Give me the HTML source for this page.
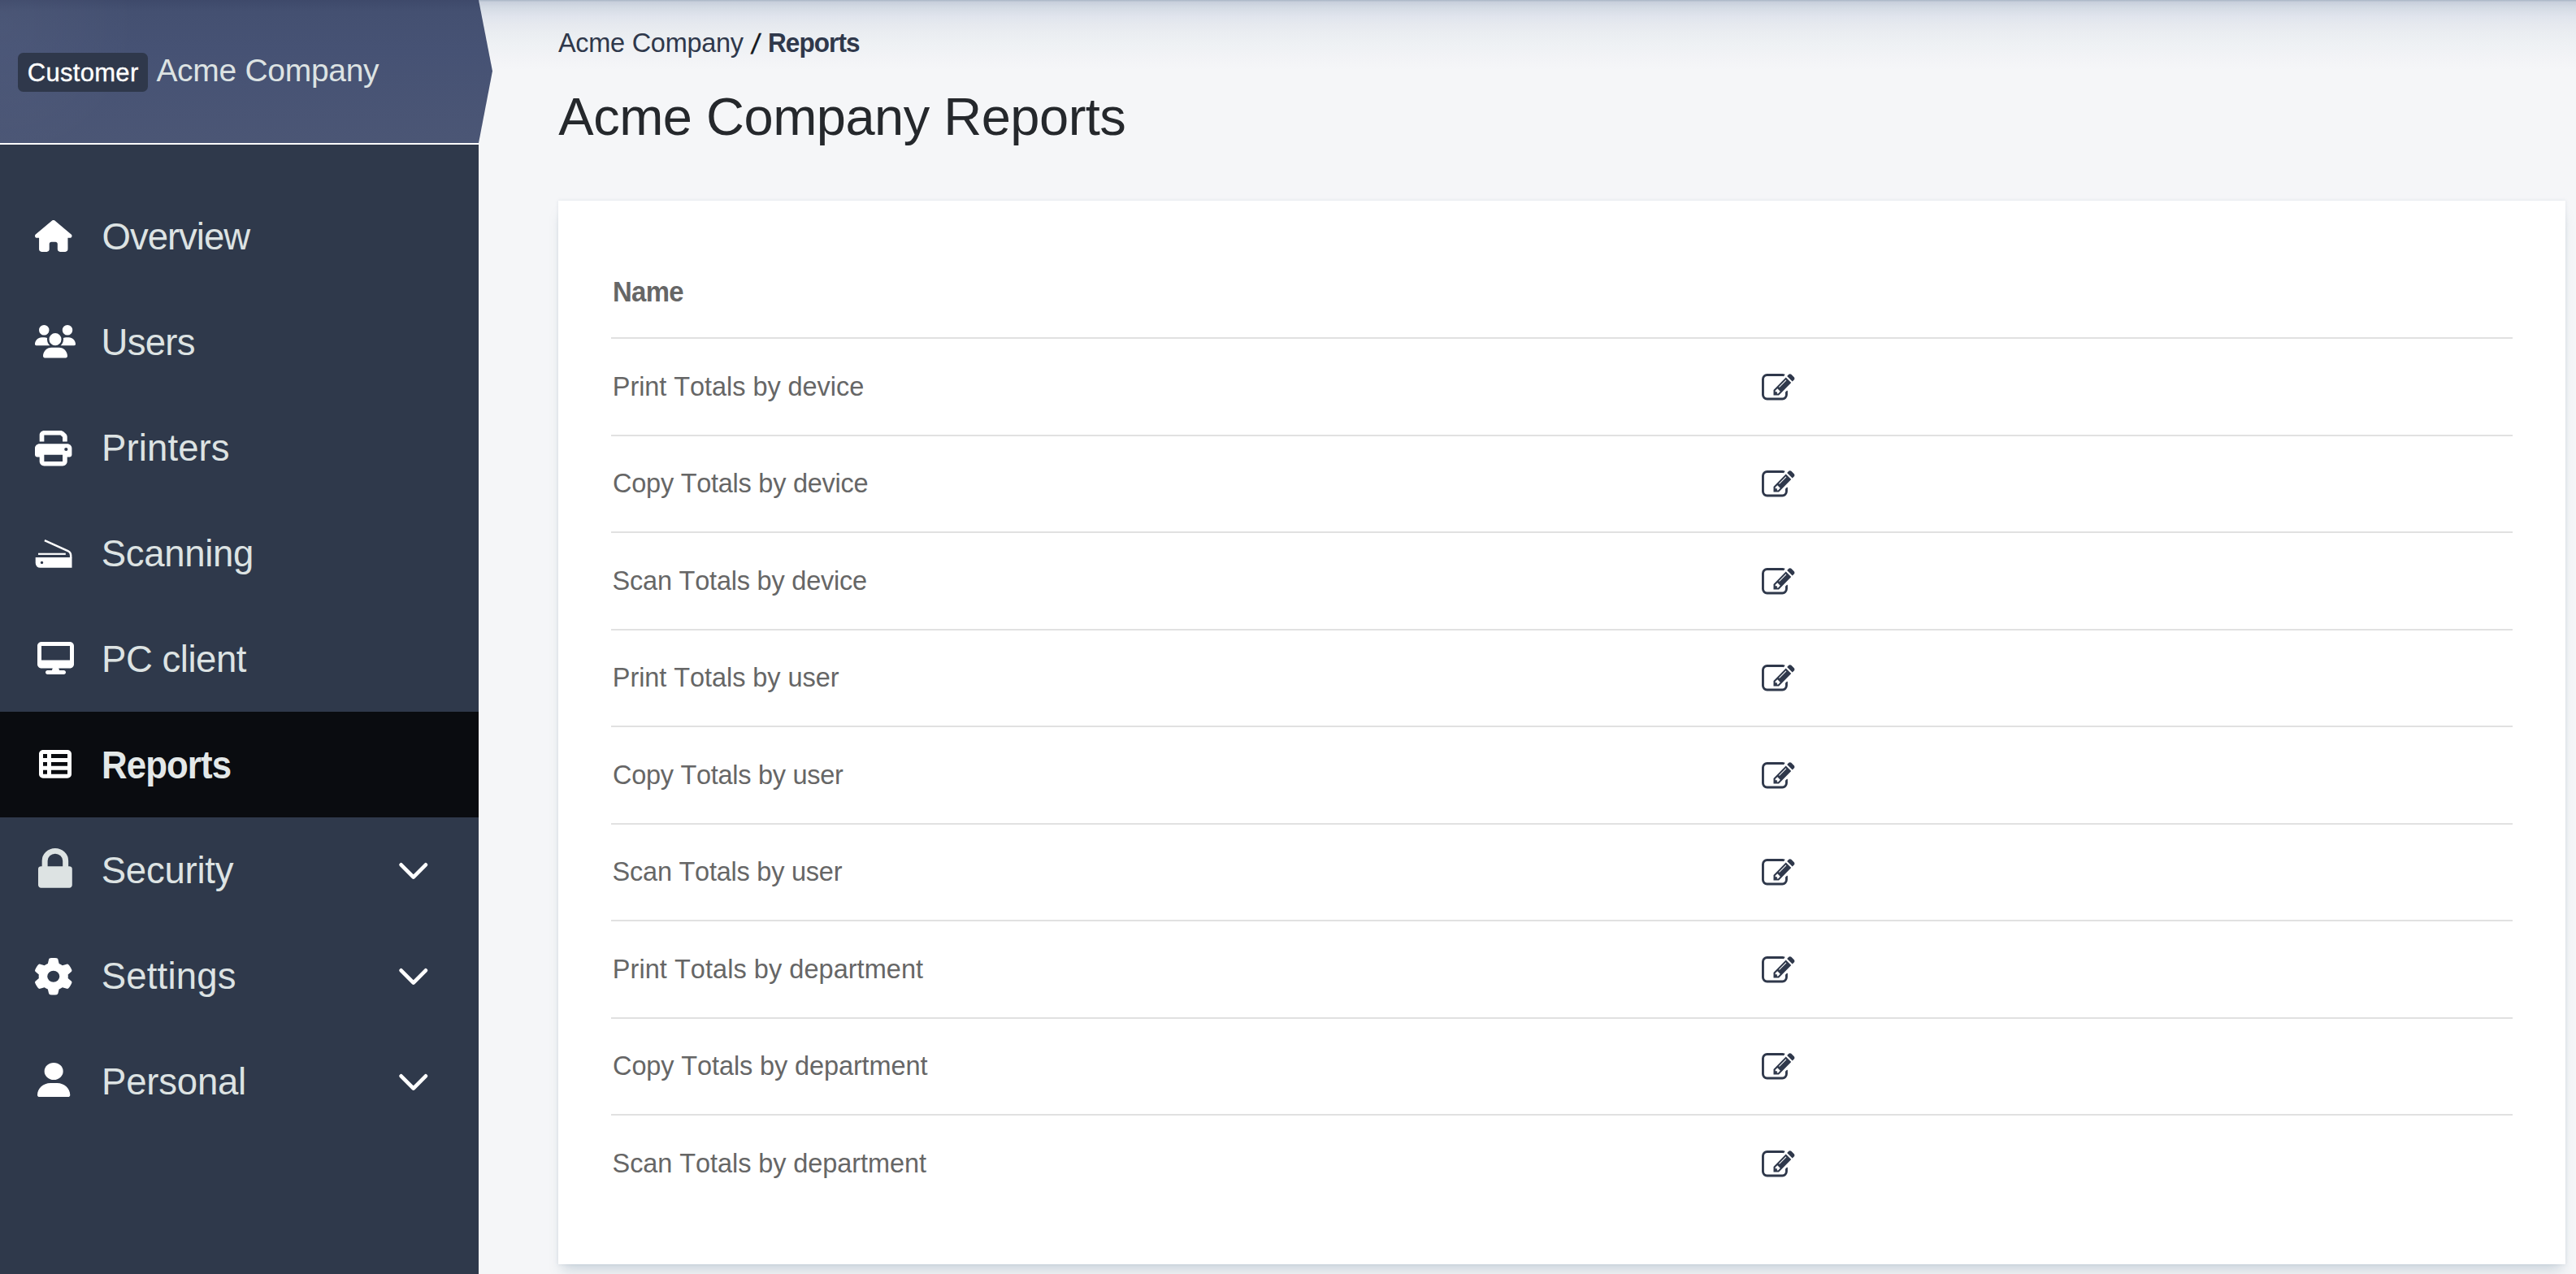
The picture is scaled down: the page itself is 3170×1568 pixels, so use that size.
<!DOCTYPE html>
<html lang="en">
<head>
<meta charset="utf-8">
<title>Acme Company Reports</title>
<style>
*{box-sizing:border-box;margin:0;padding:0}
html,body{width:3170px;height:1568px;overflow:hidden}
body{position:relative;background:#f5f6f8;font-family:"Liberation Sans",sans-serif;color:#212529}
.abs{position:absolute}
.t{position:absolute;white-space:nowrap;line-height:1;font-kerning:none}
svg{position:absolute;overflow:visible}
#main{position:absolute;left:0;top:0;width:3170px;height:1568px;background:linear-gradient(to bottom,#a8b5c5 0px,#c8cfdc 2.5px,#d5dce5 10px,#e0e4ed 20px,#e6e9ef 30px,#eaedf1 40px,#eef1f4 55px,#f2f3f6 70px,#f5f6f8 86px)}
#sidebar{position:absolute;left:0;top:0;width:589px;height:1568px;background:#2f394b}
#hdr{left:0;top:0;width:620px;height:176px}
#hdrline{position:absolute;left:0;top:176px;width:589px;height:2px;background:#fff}
#active{position:absolute;left:0;top:876px;width:589px;height:130px;background:#0a0c10}
#card{position:absolute;left:687px;top:247px;width:2470px;height:1309px;background:#fff;box-shadow:0 12.5px 15px -5px rgba(100,128,150,.28),0 0 4px rgba(100,128,150,.15)}
.hl{position:absolute;left:752px;width:2340px;height:2px;background:#e1e1e1}
</style>
</head>
<body>
<div id="main"></div>
<div id="sidebar"></div>
<svg id="hdr" viewBox="0 0 620 176">
  <defs>
    <linearGradient id="hg" x1="0" y1="0" x2="0" y2="1">
      <stop offset="0" stop-color="#3e496a"/>
      <stop offset="0.08" stop-color="#445071"/>
      <stop offset="0.35" stop-color="#465274"/>
      <stop offset="1" stop-color="#4b5675"/>
    </linearGradient>
    <radialGradient id="hr" cx="0" cy="30" r="170" gradientUnits="userSpaceOnUse">
      <stop offset="0" stop-color="#fff" stop-opacity="0.035"/>
      <stop offset="1" stop-color="#fff" stop-opacity="0"/>
    </radialGradient>
  </defs>
  <path d="M0 0H589L606 87.500L589 176H0Z" fill="url(#hg)"/>
  <path d="M0 0H589L606 87.500L589 176H0Z" fill="url(#hr)"/>
</svg>
<div id="hdrline"></div>
<div id="active"></div>
<div class="abs" style="left:22px;top:65px;width:160px;height:47.75px;border-radius:6.5px;background:#2f384b"></div>
<div class="t" id="cust" style="left:33.73px;top:73.76px;font-size:31px;color:#fff;letter-spacing:0.303px;-webkit-text-stroke:0.35px #fff;">Customer</div>
<div class="t" id="acme" style="left:192.42px;top:66.99px;font-size:39px;color:#dde3e3;letter-spacing:-0.299px;">Acme Company</div>
<div class="t" style="left:125.49px;top:268.73px;font-size:45.5px;color:#dde3e3;letter-spacing:-0.997px;">Overview</div>
<div class="t" style="left:124.60px;top:398.73px;font-size:45.5px;color:#dde3e3;letter-spacing:-0.750px;">Users</div>
<div class="t" style="left:125.02px;top:528.73px;font-size:45.5px;color:#dde3e3;letter-spacing:0.121px;">Printers</div>
<div class="t" style="left:124.73px;top:658.73px;font-size:45.5px;color:#dde3e3;letter-spacing:-0.295px;">Scanning</div>
<div class="t" style="left:125.02px;top:788.73px;font-size:45.5px;color:#dde3e3;letter-spacing:-0.455px;">PC client</div>
<div class="t" style="left:124.76px;top:917.96px;font-size:47.6px;color:#e3e8e8;letter-spacing:-0.983px;font-weight:bold;transform:scaleX(0.92);transform-origin:0 0;">Reports</div>
<div class="t" style="left:124.73px;top:1048.73px;font-size:45.5px;color:#dde3e3;letter-spacing:-0.232px;">Security</div>
<div class="t" style="left:124.73px;top:1178.73px;font-size:45.5px;color:#dde3e3;letter-spacing:0.200px;">Settings</div>
<div class="t" style="left:125.02px;top:1308.73px;font-size:45.5px;color:#dde3e3;letter-spacing:-0.200px;">Personal</div>
<div class="t" style="left:686.94px;top:36.99px;font-size:32.5px;color:#2f384b;letter-spacing:-0.279px;">Acme Company</div>
<div class="t" style="left:924.50px;top:36.99px;font-size:32.5px;color:#15181c;letter-spacing:0.000px;transform:translate(0.6px,1.2px) skewX(-9deg) scaleY(1.06);-webkit-text-stroke:0.5px #15181c;">/</div>
<div class="t" style="left:945.19px;top:36.30px;font-size:33.2px;color:#2f384b;letter-spacing:-0.976px;font-weight:bold;transform:scaleX(0.95);transform-origin:0 0;">Reports</div>
<div class="t" id="h1" style="left:687.37px;top:110.73px;font-size:65px;color:#25282c;letter-spacing:-0.504px;">Acme Company Reports</div>
<div id="card"></div>
<div class="t" id="name" style="left:753.60px;top:340.97px;font-size:35px;color:#666;letter-spacing:-0.738px;font-weight:bold;transform:scaleX(0.94);transform-origin:0 0;">Name</div>
<div class="hl" style="top:415.30px"></div>
<div class="hl" style="top:534.77px"></div>
<div class="hl" style="top:654.24px"></div>
<div class="hl" style="top:773.71px"></div>
<div class="hl" style="top:893.18px"></div>
<div class="hl" style="top:1012.65px"></div>
<div class="hl" style="top:1132.12px"></div>
<div class="hl" style="top:1251.59px"></div>
<div class="hl" style="top:1371.06px"></div>
<div class="t" style="left:753.82px;top:459.99px;font-size:32.5px;color:#666;letter-spacing:-0.060px;">Print Totals by device</div>
<div class="t" style="left:754.05px;top:579.46px;font-size:32.5px;color:#666;letter-spacing:-0.262px;">Copy Totals by device</div>
<div class="t" style="left:753.61px;top:698.93px;font-size:32.5px;color:#666;letter-spacing:-0.219px;">Scan Totals by device</div>
<div class="t" style="left:753.82px;top:818.40px;font-size:32.5px;color:#666;letter-spacing:-0.066px;">Print Totals by user</div>
<div class="t" style="left:754.05px;top:937.87px;font-size:32.5px;color:#666;letter-spacing:-0.290px;">Copy Totals by user</div>
<div class="t" style="left:753.61px;top:1057.34px;font-size:32.5px;color:#666;letter-spacing:-0.242px;">Scan Totals by user</div>
<div class="t" style="left:753.82px;top:1176.81px;font-size:32.5px;color:#666;letter-spacing:0.045px;">Print Totals by department</div>
<div class="t" style="left:754.05px;top:1296.28px;font-size:32.5px;color:#666;letter-spacing:-0.118px;">Copy Totals by department</div>
<div class="t" style="left:753.61px;top:1415.75px;font-size:32.5px;color:#666;letter-spacing:-0.083px;">Scan Totals by department</div>
<svg viewBox="0 0 575.8 512" preserveAspectRatio="none" style="left:43.1px;top:271.2px;width:45.50px;height:38.90px"><path fill="#fff"  d="M575.8 255.5c0 18-15 32.1-32 32.1h-32l.7 160.2c0 2.700-.2 5.400-.5 8.100V472c0 22.100-17.900 40-40 40H456c-1.100 0-2.200 0-3.300-.1c-1.400 .1-2.800 .1-4.200 .1H416 392c-22.100 0-40-17.900-40-40V448 384c0-17.700-14.300-32-32-32H256c-17.700 0-32 14.300-32 32v64 24c0 22.100-17.900 40-40 40H160 128.100c-1.500 0-3-.1-4.500-.2c-1.200 .1-2.400 .2-3.600 .2H104c-22.100 0-40-17.900-40-40V360c0-.9 0-1.900 .1-2.800V287.600H32c-18 0-32-14-32-32.100c0-9 3-17 10-24L266.400 8c7-7 15-8 22-8s15 2 21 7L564.800 231.500c8 7 12 15 11 24z"/></svg>
<svg viewBox="0 0 640 512" preserveAspectRatio="none" style="left:43.4px;top:399.7px;width:50.00px;height:40.40px"><path fill="#fff"  d="M144 0a80 80 0 1 1 0 160A80 80 0 1 1 144 0zM512 0a80 80 0 1 1 0 160A80 80 0 1 1 512 0zM0 298.700C0 239.800 47.800 192 106.700 192h42.700c15.900 0 31 3.500 44.600 9.700c-1.300 7.200-1.900 14.700-1.900 22.300c0 38.200 16.800 72.500 43.300 96c-.2 0-.4 0-.7 0H21.300C9.600 320 0 310.400 0 298.700zM405.300 320c-.2 0-.4 0-.7 0c26.600-23.500 43.300-57.800 43.300-96c0-7.600-.7-15-1.900-22.300c13.600-6.300 28.700-9.700 44.600-9.700h42.700C592.200 192 640 239.800 640 298.700c0 11.800-9.600 21.300-21.300 21.300H405.300zM224 224a96 96 0 1 1 192 0 96 96 0 1 1 -192 0zM128 485.300C128 411.700 187.700 352 261.300 352H378.700C452.300 352 512 411.700 512 485.300c0 14.700-11.900 26.700-26.700 26.700H154.700c-14.700 0-26.700-11.900-26.700-26.700z"/></svg>
<svg viewBox="0 0 512 512" preserveAspectRatio="none" style="left:43.2px;top:529.8px;width:45.40px;height:43.40px"><path fill="#fff"  d="M128 0C92.700 0 64 28.700 64 64v96h64V64H354.700L384 93.300V160h64V93.300c0-17-6.700-33.300-18.700-45.300L400 18.700C388 6.700 371.700 0 354.700 0H128zM384 352v32 64H128V384 368 352H384zm64 32h32c17.700 0 32-14.300 32-32V256c0-35.300-28.700-64-64-64H64c-35.300 0-64 28.700-64 64v96c0 17.700 14.300 32 32 32H64v64c0 35.300 28.700 64 64 64H384c35.300 0 64-28.700 64-64V384zM432 248a24 24 0 1 1 0 48 24 24 0 1 1 0-48z"/></svg>
<svg viewBox="0 0 60 50" style="left:35px;top:655px;width:60px;height:50px">
<path fill="#fff" fill-rule="evenodd" d="M8.7 30.9H53.5V43.8H14.4A5.700 5.700 0 0 1 8.700 38.100ZM16.500 35.700a1.700 1.700 0 1 0 .01 0Z"/>
<rect x="12" y="25.700" width="33.800" height="2.200" fill="#fff"/>
<path fill="none" stroke="#fff" stroke-width="2.500" d="M19.900 10.100L48.600 23.200Q52.200 24.900 52.200 29V31.500"/>
</svg>
<svg viewBox="0 0 576 512" preserveAspectRatio="none" style="left:45.75px;top:789.75px;width:45.00px;height:40.00px"><path fill="#fff"  d="M64 0C28.700 0 0 28.700 0 64V352c0 35.300 28.700 64 64 64H240l-10.700 32H160c-17.700 0-32 14.300-32 32s14.300 32 32 32H416c17.700 0 32-14.300 32-32s-14.300-32-32-32H346.700L336 416H512c35.300 0 64-28.700 64-64V64c0-35.300-28.700-64-64-64H64zM512 64V288H64V64H512z"/></svg>
<svg viewBox="0 32 512 448" preserveAspectRatio="none" style="left:48.25px;top:923px;width:40.00px;height:34.75px"><path fill="#fff"  d="M0 96C0 60.700 28.700 32 64 32H448c35.300 0 64 28.700 64 64V416c0 35.300-28.700 64-64 64H64c-35.300 0-64-28.700-64-64V96zm64 0v64h64V96H64zm384 0H192v64H448V96zM64 224v64h64V224H64zm384 0H192v64H448V224zM64 352v64h64V352H64zm384 0H192v64H448V352z"/></svg>
<svg viewBox="0 0 1152 1408" preserveAspectRatio="none" style="left:46.9px;top:1043.7px;width:41.80px;height:48.70px"><path fill="#dde3e3"  d="M320 640H832V448Q832 342 757 267Q682 192 576 192Q470 192 395 267Q320 342 320 448ZM1152 736V1312Q1152 1352 1124 1380Q1096 1408 1056 1408H96Q56 1408 28 1380Q0 1352 0 1312V736Q0 696 28 668Q56 640 96 640H128V448Q128 264 260 132Q392 0 576 0Q760 0 892 132Q1024 264 1024 448V640H1056Q1096 640 1124 668Q1152 696 1152 736Z"/></svg>
<svg viewBox="14.2 0 483.6 512" preserveAspectRatio="none" style="left:42.7px;top:1179.4px;width:45.50px;height:45.50px"><path fill="#fff"  d="M495.900 166.600c3.200 8.700 .5 18.400-6.400 24.600l-43.300 39.400c1.100 8.300 1.700 16.800 1.700 25.400s-.6 17.100-1.700 25.400l43.300 39.400c6.900 6.200 9.600 15.900 6.400 24.600c-4.400 11.900-9.700 23.300-15.800 34.300l-4.700 8.100c-6.600 11-14 21.400-22.100 31.200c-5.900 7.200-15.700 9.600-24.500 6.800l-55.700-17.700c-13.400 10.300-28.200 18.900-44 25.400l-12.500 57.100c-2 9.100-9 16.300-18.200 17.800c-13.800 2.300-28 3.500-42.500 3.500s-28.700-1.200-42.500-3.500c-9.200-1.500-16.200-8.700-18.200-17.800l-12.500-57.100c-15.800-6.500-30.600-15.100-44-25.400L83.100 425.900c-8.800 2.800-18.600 .3-24.500-6.800c-8.100-9.800-15.500-20.200-22.100-31.200l-4.700-8.100c-6.100-11-11.400-22.400-15.800-34.300c-3.200-8.700-.5-18.400 6.400-24.600l43.300-39.400C64.600 273.100 64 264.600 64 256s.6-17.100 1.700-25.400L22.400 191.200c-6.900-6.200-9.600-15.900-6.400-24.600c4.400-11.900 9.700-23.300 15.800-34.300l4.700-8.100c6.600-11 14-21.400 22.100-31.200c5.900-7.200 15.700-9.600 24.500-6.800l55.700 17.700c13.400-10.300 28.200-18.900 44-25.400l12.500-57.100c2-9.100 9-16.300 18.200-17.800C227.300 1.200 241.500 0 256 0s28.700 1.200 42.500 3.500c9.200 1.500 16.200 8.700 18.200 17.800l12.500 57.100c15.800 6.500 30.600 15.100 44 25.400l55.700-17.700c8.800-2.800 18.600-.3 24.500 6.800c8.100 9.800 15.500 20.200 22.100 31.200l4.700 8.100c6.100 11 11.400 22.400 15.800 34.300zM256 336a80 80 0 1 0 0-160 80 80 0 1 0 0 160z"/></svg>
<svg viewBox="0 0 448 512" preserveAspectRatio="none" style="left:45.8px;top:1308px;width:40.30px;height:42.10px"><path fill="#fff"  d="M224 256A128 128 0 1 0 224 0a128 128 0 1 0 0 256zm-45.700 48C79.800 304 0 383.800 0 482.300C0 498.700 13.300 512 29.700 512H418.300c16.400 0 29.700-13.300 29.700-29.700C448 383.800 368.200 304 269.700 304H178.300z"/></svg>
<svg viewBox="0 0 40 26" style="left:489px;top:1059.25px;width:40px;height:26px"><path fill="none" stroke="#fff" stroke-width="4.600" stroke-linecap="round" stroke-linejoin="round" d="M4.600 5.300L19.750 20.600L34.900 5.300"/></svg>
<svg viewBox="0 0 40 26" style="left:489px;top:1189.25px;width:40px;height:26px"><path fill="none" stroke="#fff" stroke-width="4.600" stroke-linecap="round" stroke-linejoin="round" d="M4.600 5.300L19.750 20.600L34.900 5.300"/></svg>
<svg viewBox="0 0 40 26" style="left:489px;top:1319.25px;width:40px;height:26px"><path fill="none" stroke="#fff" stroke-width="4.600" stroke-linecap="round" stroke-linejoin="round" d="M4.600 5.300L19.750 20.600L34.900 5.300"/></svg>
<svg viewBox="0 0 1784 1408" preserveAspectRatio="none" style="left:2167.9px;top:460.0px;width:40.40px;height:32.50px"><path fill="#2f384b"  d="M888 1056 1004 940 852 788 736 904V960H832V1056ZM1295 337 945 687Q928 704 944 720Q960 736 977 719L1327 369Q1344 352 1328 336Q1312 320 1295 337ZM1408 930V1120Q1408 1239 1323.5 1323.5Q1239 1408 1120 1408H288Q169 1408 84.5 1323.5Q0 1239 0 1120V288Q0 169 84.5 84.5Q169 0 288 0H1120Q1183 0 1237 25Q1252 32 1255 48Q1258 65 1246 77L1197 126Q1183 140 1165 134Q1142 128 1120 128H288Q222 128 175 175Q128 222 128 288V1120Q128 1186 175 1233Q222 1280 288 1280H1120Q1186 1280 1233 1233Q1280 1186 1280 1120V994Q1280 981 1289 972L1353 908Q1368 893 1388 901Q1408 909 1408 930ZM1312 192 1600 480 928 1152H640V864ZM1756 324 1664 416 1376 128 1468 36Q1496 8 1536 8Q1576 8 1604 36L1756 188Q1784 216 1784 256Q1784 296 1756 324Z"/></svg>
<svg viewBox="0 0 1784 1408" preserveAspectRatio="none" style="left:2167.9px;top:579.47px;width:40.40px;height:32.50px"><path fill="#2f384b"  d="M888 1056 1004 940 852 788 736 904V960H832V1056ZM1295 337 945 687Q928 704 944 720Q960 736 977 719L1327 369Q1344 352 1328 336Q1312 320 1295 337ZM1408 930V1120Q1408 1239 1323.5 1323.5Q1239 1408 1120 1408H288Q169 1408 84.5 1323.5Q0 1239 0 1120V288Q0 169 84.5 84.5Q169 0 288 0H1120Q1183 0 1237 25Q1252 32 1255 48Q1258 65 1246 77L1197 126Q1183 140 1165 134Q1142 128 1120 128H288Q222 128 175 175Q128 222 128 288V1120Q128 1186 175 1233Q222 1280 288 1280H1120Q1186 1280 1233 1233Q1280 1186 1280 1120V994Q1280 981 1289 972L1353 908Q1368 893 1388 901Q1408 909 1408 930ZM1312 192 1600 480 928 1152H640V864ZM1756 324 1664 416 1376 128 1468 36Q1496 8 1536 8Q1576 8 1604 36L1756 188Q1784 216 1784 256Q1784 296 1756 324Z"/></svg>
<svg viewBox="0 0 1784 1408" preserveAspectRatio="none" style="left:2167.9px;top:698.94px;width:40.40px;height:32.50px"><path fill="#2f384b"  d="M888 1056 1004 940 852 788 736 904V960H832V1056ZM1295 337 945 687Q928 704 944 720Q960 736 977 719L1327 369Q1344 352 1328 336Q1312 320 1295 337ZM1408 930V1120Q1408 1239 1323.5 1323.5Q1239 1408 1120 1408H288Q169 1408 84.5 1323.5Q0 1239 0 1120V288Q0 169 84.5 84.5Q169 0 288 0H1120Q1183 0 1237 25Q1252 32 1255 48Q1258 65 1246 77L1197 126Q1183 140 1165 134Q1142 128 1120 128H288Q222 128 175 175Q128 222 128 288V1120Q128 1186 175 1233Q222 1280 288 1280H1120Q1186 1280 1233 1233Q1280 1186 1280 1120V994Q1280 981 1289 972L1353 908Q1368 893 1388 901Q1408 909 1408 930ZM1312 192 1600 480 928 1152H640V864ZM1756 324 1664 416 1376 128 1468 36Q1496 8 1536 8Q1576 8 1604 36L1756 188Q1784 216 1784 256Q1784 296 1756 324Z"/></svg>
<svg viewBox="0 0 1784 1408" preserveAspectRatio="none" style="left:2167.9px;top:818.41px;width:40.40px;height:32.50px"><path fill="#2f384b"  d="M888 1056 1004 940 852 788 736 904V960H832V1056ZM1295 337 945 687Q928 704 944 720Q960 736 977 719L1327 369Q1344 352 1328 336Q1312 320 1295 337ZM1408 930V1120Q1408 1239 1323.5 1323.5Q1239 1408 1120 1408H288Q169 1408 84.5 1323.5Q0 1239 0 1120V288Q0 169 84.5 84.5Q169 0 288 0H1120Q1183 0 1237 25Q1252 32 1255 48Q1258 65 1246 77L1197 126Q1183 140 1165 134Q1142 128 1120 128H288Q222 128 175 175Q128 222 128 288V1120Q128 1186 175 1233Q222 1280 288 1280H1120Q1186 1280 1233 1233Q1280 1186 1280 1120V994Q1280 981 1289 972L1353 908Q1368 893 1388 901Q1408 909 1408 930ZM1312 192 1600 480 928 1152H640V864ZM1756 324 1664 416 1376 128 1468 36Q1496 8 1536 8Q1576 8 1604 36L1756 188Q1784 216 1784 256Q1784 296 1756 324Z"/></svg>
<svg viewBox="0 0 1784 1408" preserveAspectRatio="none" style="left:2167.9px;top:937.88px;width:40.40px;height:32.50px"><path fill="#2f384b"  d="M888 1056 1004 940 852 788 736 904V960H832V1056ZM1295 337 945 687Q928 704 944 720Q960 736 977 719L1327 369Q1344 352 1328 336Q1312 320 1295 337ZM1408 930V1120Q1408 1239 1323.5 1323.5Q1239 1408 1120 1408H288Q169 1408 84.5 1323.5Q0 1239 0 1120V288Q0 169 84.5 84.5Q169 0 288 0H1120Q1183 0 1237 25Q1252 32 1255 48Q1258 65 1246 77L1197 126Q1183 140 1165 134Q1142 128 1120 128H288Q222 128 175 175Q128 222 128 288V1120Q128 1186 175 1233Q222 1280 288 1280H1120Q1186 1280 1233 1233Q1280 1186 1280 1120V994Q1280 981 1289 972L1353 908Q1368 893 1388 901Q1408 909 1408 930ZM1312 192 1600 480 928 1152H640V864ZM1756 324 1664 416 1376 128 1468 36Q1496 8 1536 8Q1576 8 1604 36L1756 188Q1784 216 1784 256Q1784 296 1756 324Z"/></svg>
<svg viewBox="0 0 1784 1408" preserveAspectRatio="none" style="left:2167.9px;top:1057.35px;width:40.40px;height:32.50px"><path fill="#2f384b"  d="M888 1056 1004 940 852 788 736 904V960H832V1056ZM1295 337 945 687Q928 704 944 720Q960 736 977 719L1327 369Q1344 352 1328 336Q1312 320 1295 337ZM1408 930V1120Q1408 1239 1323.5 1323.5Q1239 1408 1120 1408H288Q169 1408 84.5 1323.5Q0 1239 0 1120V288Q0 169 84.5 84.5Q169 0 288 0H1120Q1183 0 1237 25Q1252 32 1255 48Q1258 65 1246 77L1197 126Q1183 140 1165 134Q1142 128 1120 128H288Q222 128 175 175Q128 222 128 288V1120Q128 1186 175 1233Q222 1280 288 1280H1120Q1186 1280 1233 1233Q1280 1186 1280 1120V994Q1280 981 1289 972L1353 908Q1368 893 1388 901Q1408 909 1408 930ZM1312 192 1600 480 928 1152H640V864ZM1756 324 1664 416 1376 128 1468 36Q1496 8 1536 8Q1576 8 1604 36L1756 188Q1784 216 1784 256Q1784 296 1756 324Z"/></svg>
<svg viewBox="0 0 1784 1408" preserveAspectRatio="none" style="left:2167.9px;top:1176.82px;width:40.40px;height:32.50px"><path fill="#2f384b"  d="M888 1056 1004 940 852 788 736 904V960H832V1056ZM1295 337 945 687Q928 704 944 720Q960 736 977 719L1327 369Q1344 352 1328 336Q1312 320 1295 337ZM1408 930V1120Q1408 1239 1323.5 1323.5Q1239 1408 1120 1408H288Q169 1408 84.5 1323.5Q0 1239 0 1120V288Q0 169 84.5 84.5Q169 0 288 0H1120Q1183 0 1237 25Q1252 32 1255 48Q1258 65 1246 77L1197 126Q1183 140 1165 134Q1142 128 1120 128H288Q222 128 175 175Q128 222 128 288V1120Q128 1186 175 1233Q222 1280 288 1280H1120Q1186 1280 1233 1233Q1280 1186 1280 1120V994Q1280 981 1289 972L1353 908Q1368 893 1388 901Q1408 909 1408 930ZM1312 192 1600 480 928 1152H640V864ZM1756 324 1664 416 1376 128 1468 36Q1496 8 1536 8Q1576 8 1604 36L1756 188Q1784 216 1784 256Q1784 296 1756 324Z"/></svg>
<svg viewBox="0 0 1784 1408" preserveAspectRatio="none" style="left:2167.9px;top:1296.29px;width:40.40px;height:32.50px"><path fill="#2f384b"  d="M888 1056 1004 940 852 788 736 904V960H832V1056ZM1295 337 945 687Q928 704 944 720Q960 736 977 719L1327 369Q1344 352 1328 336Q1312 320 1295 337ZM1408 930V1120Q1408 1239 1323.5 1323.5Q1239 1408 1120 1408H288Q169 1408 84.5 1323.5Q0 1239 0 1120V288Q0 169 84.5 84.5Q169 0 288 0H1120Q1183 0 1237 25Q1252 32 1255 48Q1258 65 1246 77L1197 126Q1183 140 1165 134Q1142 128 1120 128H288Q222 128 175 175Q128 222 128 288V1120Q128 1186 175 1233Q222 1280 288 1280H1120Q1186 1280 1233 1233Q1280 1186 1280 1120V994Q1280 981 1289 972L1353 908Q1368 893 1388 901Q1408 909 1408 930ZM1312 192 1600 480 928 1152H640V864ZM1756 324 1664 416 1376 128 1468 36Q1496 8 1536 8Q1576 8 1604 36L1756 188Q1784 216 1784 256Q1784 296 1756 324Z"/></svg>
<svg viewBox="0 0 1784 1408" preserveAspectRatio="none" style="left:2167.9px;top:1415.76px;width:40.40px;height:32.50px"><path fill="#2f384b"  d="M888 1056 1004 940 852 788 736 904V960H832V1056ZM1295 337 945 687Q928 704 944 720Q960 736 977 719L1327 369Q1344 352 1328 336Q1312 320 1295 337ZM1408 930V1120Q1408 1239 1323.5 1323.5Q1239 1408 1120 1408H288Q169 1408 84.5 1323.5Q0 1239 0 1120V288Q0 169 84.5 84.5Q169 0 288 0H1120Q1183 0 1237 25Q1252 32 1255 48Q1258 65 1246 77L1197 126Q1183 140 1165 134Q1142 128 1120 128H288Q222 128 175 175Q128 222 128 288V1120Q128 1186 175 1233Q222 1280 288 1280H1120Q1186 1280 1233 1233Q1280 1186 1280 1120V994Q1280 981 1289 972L1353 908Q1368 893 1388 901Q1408 909 1408 930ZM1312 192 1600 480 928 1152H640V864ZM1756 324 1664 416 1376 128 1468 36Q1496 8 1536 8Q1576 8 1604 36L1756 188Q1784 216 1784 256Q1784 296 1756 324Z"/></svg>
</body>
</html>
